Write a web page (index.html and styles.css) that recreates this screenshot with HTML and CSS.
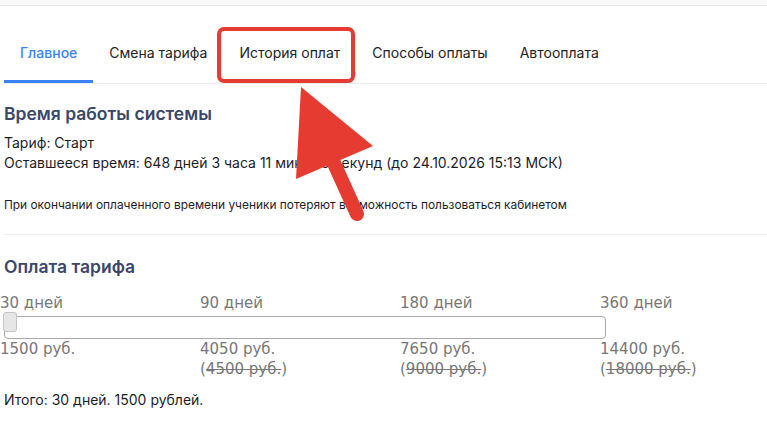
FILE: index.html
```html
<!DOCTYPE html>
<html lang="ru">
<head>
	<meta charset="UTF-8">
	<title>Тариф</title>
	<link rel="stylesheet" href="styles.css">
</head>
<body>
	<div class="topbar"></div>
	<div class="page">
		<nav class="tabs">
			<a class="tab active" href="javascript:;">Главное</a>
			<a class="tab" href="javascript:;">Смена тарифа</a>
			<a class="tab" href="javascript:;">История оплат</a>
			<a class="tab" href="javascript:;">Способы оплаты</a>
			<a class="tab" href="javascript:;">Автооплата</a>
		</nav>

		<section class="block">
			<h2 class="title">Время работы системы</h2>
			<p class="line">Тариф: Старт</p>
			<p class="line">Оставшееся время: 648 дней 3 часа 11 минут 5 секунд (до 24.10.2026 15:13 МСК)</p>
			<p class="note">При окончании оплаченного времени ученики потеряют возможность пользоваться кабинетом</p>
		</section>

		<section class="block block-pay">
			<h2 class="title">Оплата тарифа</h2>
			<div class="plans">
				<div class="labels">
					<span>30 дней</span>
					<span>90 дней</span>
					<span>180 дней</span>
					<span>360 дней</span>
				</div>
				<div class="slider">
					<span class="handle"></span>
				</div>
				<div class="labels prices">
					<span>1500 руб.</span>
					<span>4050 руб.<br>(<s>4500 руб.</s>)</span>
					<span>7650 руб.<br>(<s>9000 руб.</s>)</span>
					<span>14400 руб.<br>(<s>18000 руб.</s>)</span>
				</div>
			</div>
			<p class="total">Итого: 30 дней. 1500 рублей.</p>
		</section>
	</div>

	<!-- пометка на скриншоте -->
	<div class="mark"></div>
	<svg class="arrow" width="120" height="150" viewBox="280 80 120 150">
		<polygon points="301,87 296,179 373,146" fill="#e53b30"/>
		<line x1="328" y1="150" x2="357" y2="214" stroke="#e53b30" stroke-width="14" stroke-linecap="round"/>
	</svg>
</body>
</html>
```

FILE: styles.css
```css
body {
	margin: 0;
	font-family: Inter, "Noto Sans", Arial, sans-serif;
	font-size: 14px;
	color: #1d1d1f;
	background: #fff;
}
a {
	text-decoration: none;
}
p, h2 {
	margin: 0;
}
.topbar {
	height: 5px;
	background: #f8f8f8;
	border-bottom: 1px solid #e6e6e6;
}
.page {
	padding-left: 4px;
}
.tabs {
	display: flex;
	margin-top: 25px;
	border-bottom: 1px solid #ececec;
}
.tab {
	padding: 12px 16px 17px;
	line-height: 20px;
	color: #222;
	border-bottom: 3px solid transparent;
}
.tab.active {
	color: #3a82f7;
	border-bottom-color: #3a82f7;
	font-weight: 500;
}
.block {
	padding-top: 18px;
}
.title {
	font-size: 17.5px;
	line-height: 24px;
	font-weight: 600;
	color: #3b4768;
	margin-bottom: 7px;
}
.line {
	line-height: 20px;
}
.note {
	margin-top: 24px;
	font-size: 11.9px;
	line-height: 16px;
}
.block-pay {
	margin-top: 21px;
	border-top: 1px solid #ececec;
	padding-top: 20px;
}
.block-pay .title {
	margin-bottom: 14px;
}
.plans {
	margin-left: -4px;
	font-family: "DejaVu Sans", Verdana, sans-serif;
	font-size: 15px;
	color: #777;
}
.labels {
	display: grid;
	grid-template-columns: repeat(4, 200px);
	line-height: 20px;
}
.slider {
	position: relative;
	width: 600px;
	height: 21px;
	margin: 3px 0 0 4px;
	border: 1px solid #aaa;
	border-radius: 4px;
}
.handle {
	position: absolute;
	top: -5px;
	left: -2px;
	width: 12px;
	height: 18px;
	background: #e6e6e6;
	border: 1px solid #c5c5c5;
	border-radius: 3px;
}
.total {
	margin-top: 11px;
	line-height: 20px;
	color: #1d1d1f;
}
.mark {
	position: absolute;
	left: 217px;
	top: 27px;
	width: 130px;
	height: 48px;
	border: 4px solid #e53b30;
	border-radius: 7px;
}
.arrow {
	position: absolute;
	left: 280px;
	top: 80px;
}
```
